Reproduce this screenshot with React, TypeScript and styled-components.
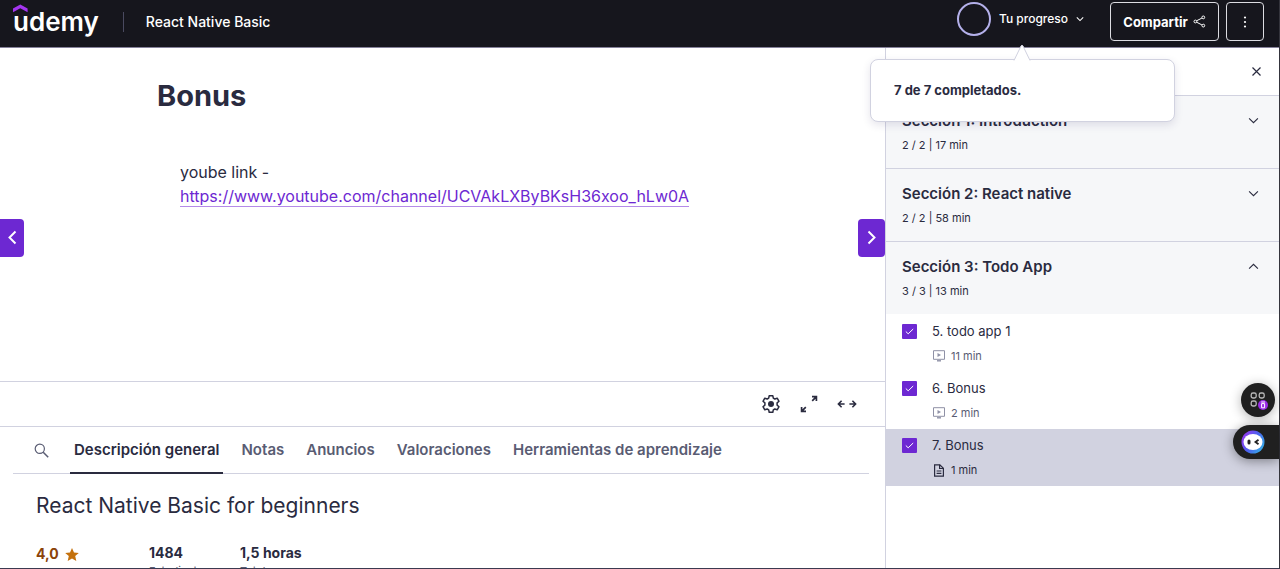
import React from "react";
import styled, { createGlobalStyle, css } from "styled-components";

const ink = "#2a2b3f";
const muted = "#595c73";
const line = "#d1d2e0";
const purple = "#6d28d2";

const GlobalStyle = createGlobalStyle`
  *, *::before, *::after { box-sizing: border-box; }
  body { margin: 0; background: #fff; }
  body, button, input { font-family: Inter, "Liberation Sans", sans-serif; color: ${ink}; }
  button { margin: 0; padding: 0; border: 0; background: none; cursor: pointer; }
  h1, h2, h3, p, ul { margin: 0; padding: 0; }
  ul { list-style: none; }
  svg { display: block; flex: none; }
`;

const Page = styled.div`
  display: flex;
  flex-direction: column;
  height: 100vh;
  overflow: hidden;
  border-right: 1px solid #34343c;
  border-bottom: 1px solid #3b3a50;
`;

const TopBar = styled.header`
  position: relative;
  z-index: 2;
  flex: none;
  display: flex;
  align-items: flex-start;
  height: 48px;
  padding: 0 15px 0 13px;
  background: #16161d;
  border-bottom: 1px solid #85819a;
  color: #fff;
`;

const Logo = styled.a`
  position: relative;
  display: block;
  height: 42px;
  padding-top: 6px;
  font-size: 26px;
  line-height: 32px;
  font-weight: 600;
  color: #fff;
  text-decoration: none;
  svg { position: absolute; left: 0; top: 4px; }
`;

const Separator = styled.span`
  width: 1px;
  height: 20px;
  margin: 12px 22px 0 24px;
  background: #4a4a60;
`;

const CourseLink = styled.a`
  flex: 1;
  padding-top: 12px;
  font-size: 14px;
  line-height: 20px;
  font-weight: 500;
  color: #fff;
  text-decoration: none;
`;

const ProgressWrap = styled.div`
  position: relative;
  margin: 1px 26px 0 0;
`;

const ProgressButton = styled.button`
  display: flex;
  align-items: center;
  gap: 8px;
  height: 35px;
  color: #fff;
  font-size: 12px;
  line-height: 20px;
  font-weight: 500;
`;

const Ring = styled.span`
  width: 34px;
  height: 34px;
  border: 2px solid #b4b0ea;
  border-radius: 50%;
`;

const Popover = styled.div`
  position: absolute;
  top: 58px;
  right: -91px;
  width: 305px;
  padding: 20px 23px 21px;
  border: 1px solid ${line};
  border-radius: 8px;
  background: #fff;
  box-shadow: 0 3px 8px rgba(40, 30, 90, 0.12);
  font-size: 13px;
  line-height: 20px;
  font-weight: 700;
  color: ${ink};
  svg { position: absolute; left: 142px; top: -16px; }
`;

const OutlineButton = styled.button<{ $square?: boolean }>`
  display: flex;
  align-items: center;
  justify-content: center;
  gap: 5px;
  width: ${(p) => (p.$square ? 38 : 109)}px;
  height: 39px;
  margin: 2px 0 0 ${(p) => (p.$square ? 7 : 0)}px;
  border: 1px solid #dcdce2;
  border-radius: 4px;
  color: #fff;
  font-size: 13px;
  font-weight: 700;
`;

const Body = styled.div`
  flex: 1;
  min-height: 0;
  display: grid;
  grid-template-columns: minmax(0, 1fr) 394px;
`;

const Main = styled.main`
  min-width: 0;
  overflow: hidden;
`;

const Stage = styled.section`
  display: flex;
  align-items: center;
  justify-content: space-between;
  height: 333px;
`;

const Lecture = styled.article`
  flex: 1;
  align-self: flex-start;
  padding: 30px 133px 0;
`;

const LectureTitle = styled.h1`
  font-size: 29px;
  line-height: 36px;
  font-weight: 700;
`;

const LectureText = styled.p`
  margin: 46px 0 0 23px;
  font-size: 16px;
  line-height: 24px;
  a {
    color: ${purple};
    text-decoration: none;
    border-bottom: 1px solid #b48be8;
  }
`;

const StepButton = styled.button<{ $side: "left" | "right" }>`
  flex: none;
  display: flex;
  align-items: center;
  justify-content: center;
  width: ${(p) => (p.$side === "left" ? 24 : 27)}px;
  height: 38px;
  margin-top: 46px;
  background: ${purple};
  color: #fff;
  border-radius: ${(p) => (p.$side === "left" ? "0 4px 4px 0" : "4px")};
`;

const Controls = styled.div`
  display: flex;
  align-items: center;
  justify-content: flex-end;
  gap: 18px;
  height: 46px;
  padding-right: 28px;
  border-top: 1px solid ${line};
  border-bottom: 1px solid ${line};
`;

const Tabs = styled.nav`
  display: flex;
  height: 47px;
  margin: 0 16px 0 13px;
  padding-left: 20px;
  border-bottom: 1px solid ${line};
`;

const SearchTab = styled.button`
  display: flex;
  align-items: center;
  justify-content: center;
  width: 17px;
  margin-right: 20px;
`;

const Tab = styled.button<{ $active?: boolean }>`
  height: 47px;
  padding: 0 4px;
  margin-right: 14px;
  font-size: 15px;
  font-weight: 600;
  white-space: nowrap;
  color: ${muted};
  border-bottom: 2px solid transparent;
  ${(p) =>
    p.$active &&
    css`
      color: ${ink};
      border-bottom-color: ${ink};
    `}
`;

const Overview = styled.section`
  padding: 16px 36px 0;
`;

const OverviewTitle = styled.h2`
  font-size: 21px;
  line-height: 32px;
  font-weight: 400;
`;

const Stats = styled.div`
  display: flex;
  margin-top: 21px;
`;

const Stat = styled.div<{ $width: number }>`
  width: ${(p) => p.$width}px;
  font-size: 11px;
  line-height: 16px;
  color: ${muted};
  strong {
    display: flex;
    align-items: center;
    gap: 6px;
    font-size: 14px;
    line-height: 20px;
    color: ${ink};
  }
`;

const RatingValue = styled.strong`
  padding-top: 1px;
  && { color: #8b4309; }
`;

const Sidebar = styled.aside`
  border-left: 1px solid ${line};
  background: #fff;
  overflow: hidden;
`;

const SidebarHead = styled.div`
  display: flex;
  align-items: center;
  justify-content: flex-end;
  height: 48px;
  padding-right: 18px;
  border-bottom: 1px solid ${line};
`;

const SectionButton = styled.button<{ $last?: boolean }>`
  display: flex;
  align-items: flex-start;
  justify-content: space-between;
  width: 100%;
  height: ${(p) => (p.$last ? 72 : 73)}px;
  padding: 14px 20px 0 16px;
  text-align: left;
  background: #f6f7f9;
  border-bottom: ${(p) => (p.$last ? "0" : `1px solid ${line}`)};
  svg { margin-top: 5px; }
`;

const SectionName = styled.span`
  display: block;
  font-size: 15px;
  line-height: 22px;
  font-weight: 600;
`;

const SectionMeta = styled.span`
  display: block;
  margin-top: 4px;
  font-size: 11px;
  line-height: 18px;
`;

const LessonList = styled.ul`
  && { padding-top: 1px; }
`;

const Lesson = styled.li<{ $current?: boolean }>`
  display: flex;
  height: 57px;
  padding: 7px 16px 0 16px;
  background: ${(p) => (p.$current ? line : "#fff")};
`;

const CheckBox = styled.span`
  position: relative;
  width: 15px;
  height: 15px;
  margin: 2px 15px 0 0;
  input {
    appearance: none;
    display: block;
    width: 15px;
    height: 15px;
    margin: 0;
    background: ${purple};
    border-radius: 1px;
  }
  svg { position: absolute; left: 3px; top: 4px; pointer-events: none; }
`;

const LessonName = styled.label`
  display: block;
  font-size: 13px;
  line-height: 18px;
`;

const LessonMeta = styled.span<{ $strong?: boolean }>`
  display: flex;
  align-items: center;
  gap: 5px;
  margin-top: 8px;
  font-size: 11px;
  line-height: 16px;
  color: ${(p) => (p.$strong ? ink : muted)};
`;

const Widgets = styled.div`
  position: fixed;
  right: 1px;
  top: 383px;
  z-index: 3;
  display: flex;
  flex-direction: column;
  align-items: flex-end;
  gap: 8px;
`;

const RoundWidget = styled.button`
  display: flex;
  align-items: center;
  justify-content: center;
  width: 34px;
  height: 34px;
  margin-right: 4px;
  border-radius: 50%;
  background: #202020;
  box-shadow: 0 2px 12px rgba(0, 0, 0, 0.3);
`;

const DockWidget = styled.button`
  display: flex;
  align-items: center;
  width: 46px;
  height: 34px;
  padding-left: 8px;
  border-radius: 17px 0 0 17px;
  background: #202020;
  box-shadow: 0 2px 12px rgba(0, 0, 0, 0.4);
`;

const Chevron = ({ dir, size = 10, weight = 1 }: { dir: "up" | "down" | "left" | "right"; size?: number; weight?: number }) => {
  const paths = {
    up: "M1 7l4-4 4 4",
    down: "M1 3l4 4 4-4",
    left: "M7 1L3 5l4 4",
    right: "M3 1l4 4-4 4",
  };
  return (
    <svg width={size} height={size} viewBox="0 0 10 10" fill="none" stroke="currentColor" strokeWidth={weight}>
      <path d={paths[dir]} />
    </svg>
  );
};

const VideoIcon = () => (
  <svg width="14" height="12" viewBox="0 0 14 12" fill="none" stroke="#8f91a6">
    <path d="M1.5 .7h11v8.6h-11z" />
    <path d="M5.5 3v4L9 5z" fill="#8f91a6" stroke="none" />
    <path d="M5 10.8h4" strokeWidth="1.4" />
  </svg>
);

const FileIcon = () => (
  <svg width="14" height="13" viewBox="0 0 14 13" fill="none" stroke={ink} strokeWidth="1.2">
    <path d="M2.6 .8h5.2l3.6 3.5v7.9H2.6z" />
    <path d="M7.6 .8v3.7h3.8M4.6 7h4.8M4.6 9.4h4.8" />
  </svg>
);

const sections = [
  { name: "Sección 1: Introduction", meta: "2 / 2 | 17 min" },
  { name: "Sección 2: React native", meta: "2 / 2 | 58 min" },
  { name: "Sección 3: Todo App", meta: "3 / 3 | 13 min", open: true },
];

const lessons = [
  { name: "5. todo app 1", time: "11 min" },
  { name: "6. Bonus", time: "2 min" },
  { name: "7. Bonus", time: "1 min", current: true },
];

const tabs = ["Descripción general", "Notas", "Anuncios", "Valoraciones", "Herramientas de aprendizaje"];

export default function App() {
  return (
    <Page>
      <GlobalStyle />
      <TopBar>
        <Logo href="#">
          <svg width="15" height="9" viewBox="0 0 15 9" fill="#a435f0">
            <path d="M0 4.5L7.3 .4l7.3 4.1v3.8L7.3 4.2 0 8.3z" />
          </svg>
          udemy
        </Logo>
        <Separator />
        <CourseLink href="#">React Native Basic</CourseLink>
        <ProgressWrap>
          <ProgressButton>
            <Ring />
            Tu progreso
            <Chevron dir="down" size={8} weight={1.3} />
          </ProgressButton>
          <Popover role="status">
            <svg width="18" height="18" viewBox="0 0 18 18">
              <path d="M1 17L8 2Q9 .4 10 2L17 17z" fill="#fff" />
              <path d="M1 16.5L8 2Q9 .4 10 2L17 16.5" fill="none" stroke={line} />
            </svg>
            7 de 7 completados.
          </Popover>
        </ProgressWrap>
        <OutlineButton>
          Compartir
          <svg width="13" height="13" viewBox="0 0 13 13" fill="none" stroke="currentColor">
            <circle cx="10.3" cy="2.4" r="1.4" />
            <circle cx="2.4" cy="6.5" r="1.4" />
            <circle cx="10.3" cy="10.6" r="1.4" />
            <path d="M3.6 5.8l5.3-2.7M3.6 7.2l5.3 2.7" />
          </svg>
        </OutlineButton>
        <OutlineButton $square aria-label="Más opciones">
          <svg width="4" height="12" viewBox="0 0 4 12" fill="currentColor">
            <circle cx="2" cy="1.5" r="1.1" />
            <circle cx="2" cy="6" r="1.1" />
            <circle cx="2" cy="10.5" r="1.1" />
          </svg>
        </OutlineButton>
      </TopBar>

      <Body>
        <Main>
          <Stage>
            <StepButton $side="left" aria-label="Anterior">
              <Chevron dir="left" size={15} weight={1.3} />
            </StepButton>
            <Lecture>
              <LectureTitle>Bonus</LectureTitle>
              <LectureText>
                yoube link -<br />
                <a href="#">https://www.youtube.com/channel/UCVAkLXByBKsH36xoo_hLw0A</a>
              </LectureText>
            </Lecture>
            <StepButton $side="right" aria-label="Siguiente">
              <Chevron dir="right" size={15} weight={1.3} />
            </StepButton>
          </Stage>

          <Controls>
            <button aria-label="Ajustes">
              <svg width="20" height="20" viewBox="0 0 20 20" fill="none" stroke="currentColor" strokeWidth="1.5" strokeLinejoin="round">
                <path d="M8.2 1.7h3.6l.5 2.4 1.5.9 2.4-.8 1.8 3.1-1.9 1.6v2.2l1.9 1.6-1.8 3.1-2.4-.8-1.5.9-.5 2.4H8.2l-.5-2.4-1.5-.9-2.4.8L2 12.7l1.9-1.6V8.9L2 7.3l1.8-3.1 2.4.8 1.5-.9z" />
                <circle cx="10" cy="10" r="3" fill="currentColor" stroke="none" />
              </svg>
            </button>
            <button aria-label="Pantalla completa">
              <svg width="20" height="20" viewBox="0 0 20 20" fill="none" stroke="currentColor" strokeWidth="1.7">
                <path d="M13 2.6h4.4V7M17.2 2.8l-4 4M7 17.4H2.6V13M2.8 17.2l4-4" />
              </svg>
            </button>
            <button aria-label="Vista ampliada">
              <svg width="20" height="20" viewBox="0 0 20 20" fill="none" stroke="currentColor" strokeWidth="1.6">
                <path d="M4.6 6.8L1.4 10l3.2 3.2M1.6 10h6M15.4 6.8l3.2 3.2-3.2 3.2M18.4 10h-6" />
              </svg>
            </button>
          </Controls>

          <Tabs>
            <SearchTab aria-label="Buscar">
              <svg width="15" height="15" viewBox="0 0 15 15" fill="none" stroke={muted} strokeWidth="1.2">
                <circle cx="5.8" cy="5.8" r="4.6" />
                <path d="M9.2 9.2l5 5" strokeWidth="1.5" />
              </svg>
            </SearchTab>
            {tabs.map((t, i) => (
              <Tab key={t} $active={i === 0}>{t}</Tab>
            ))}
          </Tabs>

          <Overview>
            <OverviewTitle>React Native Basic for beginners</OverviewTitle>
            <Stats>
              <Stat $width={113}>
                <RatingValue>
                  4,0
                  <svg width="14" height="13" viewBox="0 0 14 13" fill="#c4710d">
                    <path d="M7 0l2 4.4 4.8.5-3.6 3.2 1.1 4.8L7 10.4l-4.3 2.5 1.1-4.8L.2 4.9 5 4.4z" />
                  </svg>
                </RatingValue>
              </Stat>
              <Stat $width={91}>
                <strong>1484</strong>
                Estudiantes
              </Stat>
              <Stat $width={91}>
                <strong>1,5 horas</strong>
                Total
              </Stat>
            </Stats>
          </Overview>
        </Main>

        <Sidebar>
          <SidebarHead>
            <button aria-label="Cerrar">
              <svg width="9" height="9" viewBox="0 0 9 9" stroke="currentColor" strokeWidth="1.2">
                <path d="M.5 .5l8 8M8.5 .5l-8 8" />
              </svg>
            </button>
          </SidebarHead>
          {sections.map((s) => (
            <SectionButton key={s.name} $last={s.open} aria-expanded={!!s.open}>
              <span>
                <SectionName>{s.name}</SectionName>
                <SectionMeta>{s.meta}</SectionMeta>
              </span>
              <Chevron dir={s.open ? "up" : "down"} size={11} />
            </SectionButton>
          ))}
          <LessonList>
            {lessons.map((l, i) => (
              <Lesson key={l.name} $current={l.current}>
                <CheckBox>
                  <input type="checkbox" id={`lesson-${i}`} defaultChecked />
                  <svg width="9" height="7" viewBox="0 0 9 7" fill="none" stroke="#fff">
                    <path d="M.8 3.5l2.4 2.3L8.2 1" />
                  </svg>
                </CheckBox>
                <div>
                  <LessonName htmlFor={`lesson-${i}`}>{l.name}</LessonName>
                  <LessonMeta $strong={l.current}>
                    {l.current ? <FileIcon /> : <VideoIcon />}
                    {l.time}
                  </LessonMeta>
                </div>
              </Lesson>
            ))}
          </LessonList>
        </Sidebar>
      </Body>

      <Widgets>
        <RoundWidget aria-label="Aplicaciones">
          <svg width="20" height="20" viewBox="0 0 20 20" fill="none" stroke="#b9b9b9" strokeWidth="1.3">
            <rect x="3.2" y="3" width="5" height="5" rx="1.8" />
            <rect x="11.2" y="3" width="5" height="5" rx="1.8" />
            <rect x="3.2" y="11" width="5" height="5" rx="1.8" />
            <circle cx="15" cy="15" r="5" fill="#9a2be8" stroke="none" />
            <path d="M13.6 13.6h3v4.2h-3zM13.2 12h3.8" stroke="#fff" strokeWidth="1" />
          </svg>
        </RoundWidget>
        <DockWidget aria-label="Asistente">
          <svg width="24" height="24" viewBox="0 0 24 24">
            <defs>
              <linearGradient id="halo" x1="0" y1="0.2" x2="1" y2="0.8">
                <stop offset="0" stopColor="#9b35f0" />
                <stop offset="0.5" stopColor="#4b62ee" />
                <stop offset="1" stopColor="#35b5e8" />
              </linearGradient>
            </defs>
            <circle cx="12" cy="12" r="11.5" fill="url(#halo)" />
            <ellipse cx="12" cy="12" rx="9.5" ry="8" fill="#fff" />
            <rect x="6.5" y="9.5" width="3" height="5" rx="1.5" fill="#222" />
            <path d="M17.5 9.8L14.5 12l3 2.2" fill="none" stroke="#222" strokeWidth="1.8" />
          </svg>
        </DockWidget>
      </Widgets>
    </Page>
  );
}
